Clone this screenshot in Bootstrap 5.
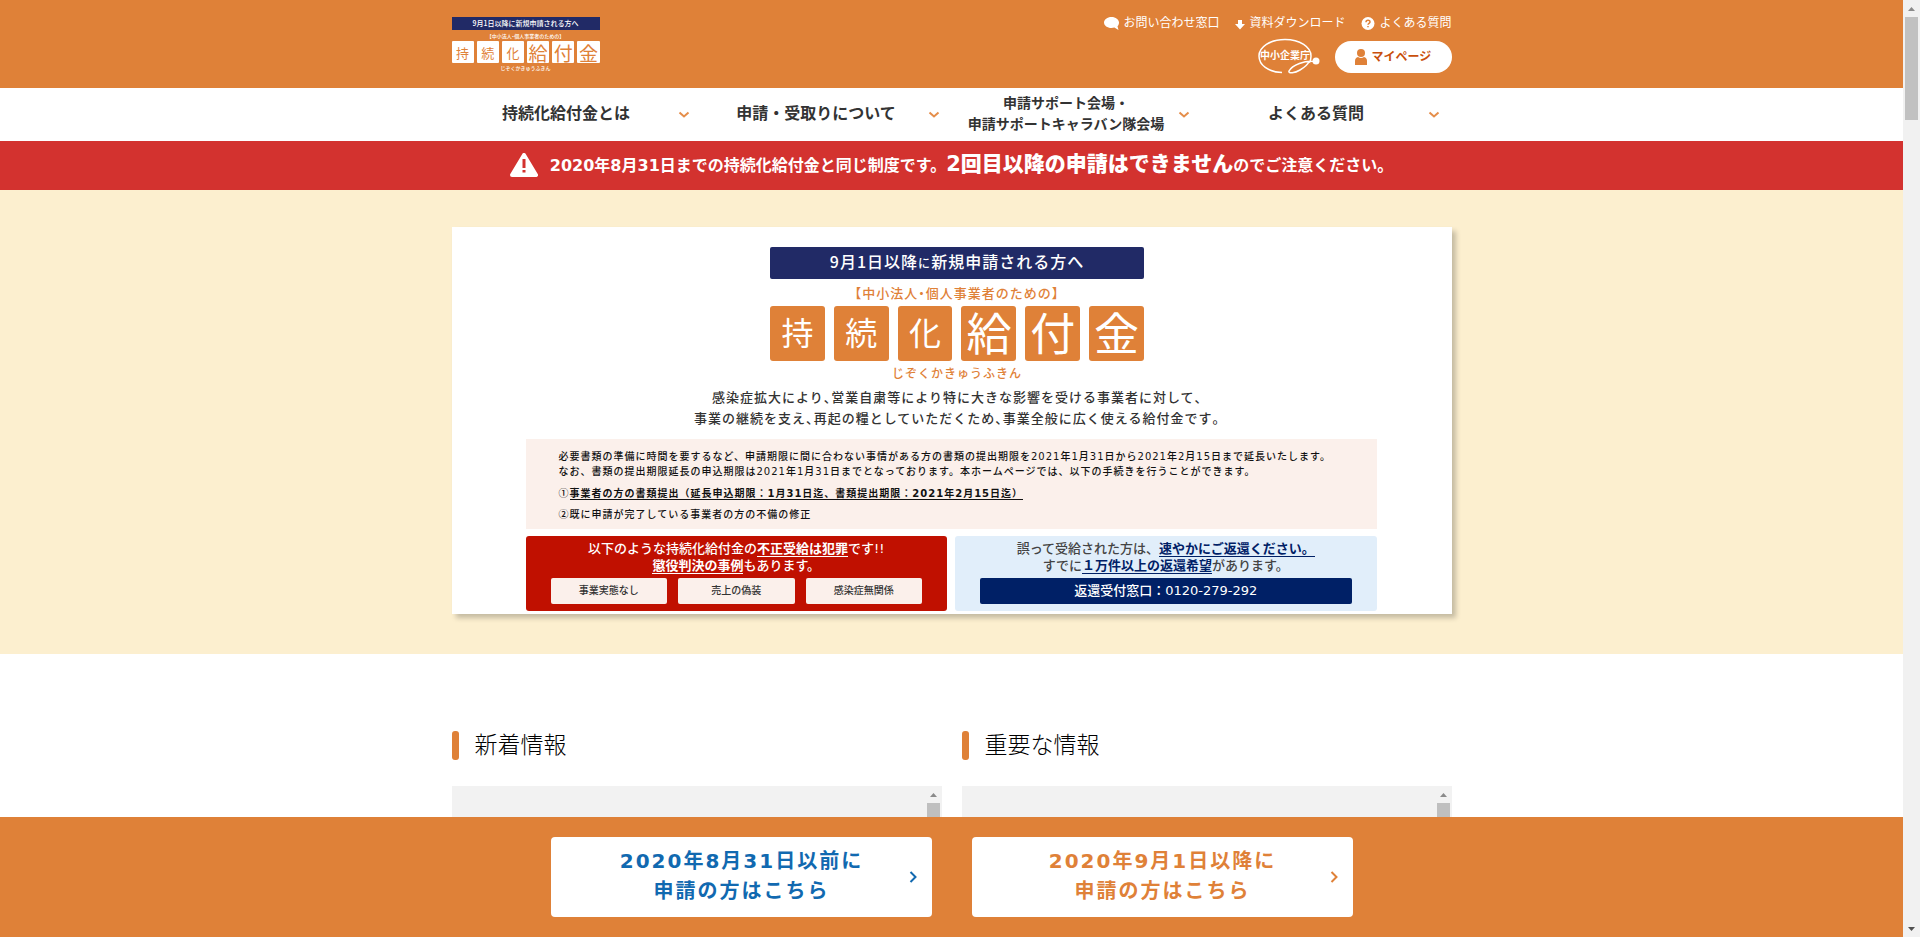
<!DOCTYPE html>
<html lang="ja">
<head>
<meta charset="utf-8">
<meta name="viewport" content="width=device-width, initial-scale=1">
<title>持続化給付金</title>
<link rel="stylesheet" href="https://cdn.jsdelivr.net/npm/bootstrap@5.3.0/dist/css/bootstrap.min.css">
<style>
:root{--brand:#df8138;--navy:#212a66;--deep:#002066}
body{font-family:"DejaVu Sans","Noto Sans CJK JP",sans-serif;color:#333;background:#fff}
a{text-decoration:none;color:inherit}
.site-width{width:100%;max-width:1000px;margin-inline:auto}
.bg-brand{background:var(--brand)}
.site-header{height:88px}
/* title artwork, shared by the header and the hero */
.title-art{font-family:"Noto Sans CJK JP",sans-serif;font-weight:500;text-align:center;line-height:1}
.half{font-feature-settings:"halt"}
.title-banner{background:var(--navy);color:#fff}
.tile{display:flex;align-items:center;justify-content:center;font-weight:400;flex:1 1 0;min-width:0}
.art-s{width:148px;color:#fff;margin-top:17px}
.art-s .title-banner{font-size:7px;line-height:13px}
.art-s .title-sub{font-size:5px;line-height:11px}
.art-s .tiles{gap:3px}
.art-s .tile{height:22px;background:#fff;color:var(--brand);font-size:13px;border-radius:1px}
.art-s .tile.big{font-size:19px}
.art-s .title-kana{font-size:5px;line-height:10px}
.art-l{width:374px;color:var(--brand)}
.art-l .title-banner{font-size:16px;letter-spacing:1px;line-height:29px;padding-bottom:2px;border-radius:2px}
.art-l .title-banner small{font-size:12px}
.art-l .title-sub{font-size:13px;letter-spacing:1px;line-height:27px}
.art-l .tiles{gap:9px}
.art-l .tile{height:55px;background:var(--brand);color:#fff;font-size:32px;line-height:49px;padding-bottom:4px;border-radius:3px}
.art-l .tile.big{font-size:45px}
.art-l .title-kana{font-size:12px;letter-spacing:1px;line-height:24px}
.util{font-size:12px;line-height:18px;color:#fff;gap:16px;padding-top:14px}
.util a{gap:4px}
.account{gap:14px;padding-top:6px}
.agency{width:64px;height:38px}
.mypage{width:117px;height:32px;font-size:12px;font-weight:700;color:#c9500c;background:#fff;gap:5px;margin-top:3px}
.gnav{height:53px}
.gnav button{flex:1 1 0;border:0;background:none;color:#333;font-weight:700;font-size:16px;line-height:21px;padding:0 12px 0 3px;height:53px}
.gnav span{padding-bottom:2px}
.gnav .two-line{font-size:14px}
.notice{background:#d3322f;color:#fff;height:49px;font-size:16px;font-weight:700;gap:12px;padding-bottom:2px}
.notice strong{font-size:21px}
.hero{background:#fcefcf;padding:37px 0 40px}
.hero-card{background:#fff;padding:20px 75px 3px 74px;box-shadow:4px 4px 5px rgba(0,0,0,.22);font-weight:500}
.hero-head{padding-left:12px}
.lead-copy{font-size:13px;letter-spacing:1px;line-height:21px;text-align:center;height:54px;padding-top:2px}
.procedure{background:#fbf0eb;color:#111;font-size:10px;letter-spacing:1px;padding:10px 30px 0 33px;height:90px}
.procedure p{line-height:15px}
.procedure li{line-height:20px}
.procedure i{font-style:normal;font-family:"Noto Sans CJK JP",sans-serif}
.procedure b,.warn b,.refund b{border-bottom:1px solid currentColor}
.boxes{padding-top:7px}
.warn,.refund{height:75px;flex:1 1 0;border-radius:3px;padding:4px 25px 0;font-size:13px;line-height:17px;text-align:center}
.warn{background:#c01000;color:#fff}
.refund{background:#e1eefa;color:#444}
.refund b{color:var(--deep)}
.cases{gap:11px}
.case{flex:1 1 0;height:26px;line-height:26px;background:#fbf0eb;color:#333;border-radius:2px;font-size:10px}
.phone{display:block;height:26px;line-height:26px;background:var(--deep);color:#fff;border-radius:2px}
.info{padding-top:77px}
.info h2{font-size:23px;font-weight:300;line-height:29px;color:#000;gap:16px;margin:0 0 26px}
.info h2::before{content:"";width:7px;height:29px;border-radius:3px;background:var(--brand)}
.panel{background:#f2f2f2;height:360px;padding:3px 2px}
.panel-bar{width:13px;padding-top:4px}
.panel-thumb{width:13px;height:80px;background:#bfbfbf;margin-top:6px}
.cta{height:120px;gap:40px}
.cta a{width:381px;height:80px;background:#fff;border-radius:4px;font-size:20px;line-height:30px;font-weight:700;letter-spacing:2px;padding:0 15px 0 24px}
.cta span{padding-bottom:2px}
.cta .before{color:#1169b0}
.cta .after{color:var(--brand)}
.page-bar{width:17px;background:#f1f1f1;padding:7px 2px 6px}
.page-thumb{width:13px;height:103px;background:#c1c1c1;margin-top:6px}
</style>
</head>
<body>
<div class="d-flex vh-100 overflow-hidden">
<div class="d-flex flex-column flex-grow-1 overflow-hidden">
<div class="flex-grow-1 overflow-hidden">

<header class="site-header bg-brand">
<div class="site-width d-flex justify-content-between">
  <a href="#" class="title-art art-s">
    <div class="title-banner">9月1日以降に新規申請される方へ</div>
    <div class="title-sub"><span class="half">【</span>中小法人<span class="half">・</span>個人事業者のための<span class="half">】</span></div>
    <div class="tiles d-flex"><span class="tile">持</span><span class="tile">続</span><span class="tile">化</span><span class="tile big">給</span><span class="tile big">付</span><span class="tile big">金</span></div>
    <div class="title-kana">じぞくかきゅうふきん</div>
  </a>
  <div>
    <div class="util d-flex justify-content-end">
      <a href="#" class="d-flex align-items-center"><svg width="15" height="13" viewBox="0 0 15 13" fill="#fff"><path d="M7.500 0C3.300 0 0 2.500 0 5.500S3.300 11 7.500 11c1 0 2-.1 2.900-.4L14.500 13l-1-3.700C14.500 8.300 15 7 15 5.500 15 2.500 11.700 0 7.500 0z"/></svg>お問い合わせ窓口</a>
      <a href="#" class="d-flex align-items-center"><svg width="10" height="13" viewBox="0 0 10 13" fill="#fff"><path d="M3 3h4v4h3l-5 5.500L0 7h3z"/></svg>資料ダウンロード</a>
      <a href="#" class="d-flex align-items-center"><svg width="14" height="13" viewBox="0 0 14 13"><circle cx="7" cy="6.500" r="6.500" fill="#fff"/><path d="M5 5.200c0-2.600 4-2.600 4-.3C9 6.300 7 6.300 7 7.800M7 8.900v1.400" fill="none" stroke="#df8138" stroke-width="1.500"/></svg>よくある質問</a>
    </div>
    <div class="account d-flex justify-content-end">
      <a href="#" aria-label="中小企業庁"><svg class="agency d-block" viewBox="0 0 64 38"><g fill="none" stroke="#fff" stroke-width="1.500"><path d="M25 34.500C11 34 2 27 2 18 2 9 13 1.500 28 1.500S54 9 54 18c0 2.500-.6 5-1.500 7M58 23.500C48 22 35 27 32 33c-1 3 6 2 11-1 5-2.800 8-6 9.500-9"/></g><circle cx="59" cy="23" r="3.500" fill="#fff"/><text x="28" y="21" text-anchor="middle" font-family="Noto Sans CJK JP, sans-serif" font-size="10" font-weight="700" fill="#fff">中小企業庁</text></svg></a>
      <a href="#" class="mypage rounded-pill d-flex align-items-center justify-content-center"><svg width="12" height="16" viewBox="0 0 12 16" fill="#df8138"><circle cx="6" cy="4" r="4"/><path d="M0 16v-4c0-2 1-3.500 3-4 2 1.300 4 1.300 6 0 2 .5 3 2 3 4v4z"/></svg>マイページ</a>
    </div>
  </div>
</div>
</header>

<nav class="gnav site-width d-flex">
  <button type="button" class="d-flex align-items-center"><span class="flex-grow-1">持続化給付金とは</span><svg width="12" height="8" viewBox="0 0 12 8"><path d="M1.500 1.500 6 5.500l4.500-4" fill="none" stroke="#e58e4b" stroke-width="2"/></svg></button>
  <button type="button" class="d-flex align-items-center"><span class="flex-grow-1">申請・受取りについて</span><svg width="12" height="8" viewBox="0 0 12 8"><path d="M1.500 1.500 6 5.500l4.500-4" fill="none" stroke="#e58e4b" stroke-width="2"/></svg></button>
  <button type="button" class="d-flex align-items-center two-line"><span class="flex-grow-1">申請サポート会場・<br>申請サポートキャラバン隊会場</span><svg width="12" height="8" viewBox="0 0 12 8"><path d="M1.500 1.500 6 5.500l4.500-4" fill="none" stroke="#e58e4b" stroke-width="2"/></svg></button>
  <button type="button" class="d-flex align-items-center"><span class="flex-grow-1">よくある質問</span><svg width="12" height="8" viewBox="0 0 12 8"><path d="M1.500 1.500 6 5.500l4.500-4" fill="none" stroke="#e58e4b" stroke-width="2"/></svg></button>
</nav>

<div class="notice d-flex align-items-center justify-content-center">
  <svg width="28" height="24" viewBox="0 0 28 24"><path d="M14 2 26 22H2z" fill="#fff" stroke="#fff" stroke-width="4" stroke-linejoin="round"/><path d="M14 6v9M14 17v2.500" stroke="#d3322f" stroke-width="3"/></svg>
  <span>2020年8月31日までの持続化給付金と同じ制度です。<strong>2回目以降の申請はできません</strong>のでご注意ください。</span>
</div>

<main>
<section class="hero">
<div class="hero-card site-width">
  <div class="hero-head">
  <div class="title-art art-l mx-auto">
    <div class="title-banner">9月1日以降<small>に</small>新規申請される方へ</div>
    <div class="title-sub"><span class="half">【</span>中小法人<span class="half">・</span>個人事業者のための<span class="half">】</span></div>
    <div class="tiles d-flex"><span class="tile">持</span><span class="tile">続</span><span class="tile">化</span><span class="tile big">給</span><span class="tile big">付</span><span class="tile big">金</span></div>
    <div class="title-kana">じぞくかきゅうふきん</div>
  </div>
  <p class="lead-copy mb-0">感染症拡大により<span class="half">、</span>営業自粛等により特に大きな影響を受ける事業者に対して<span class="half">、</span><br>事業の継続を支え<span class="half">、</span>再起の糧としていただくため<span class="half">、</span>事業全般に広く使える給付金です<span class="half">。</span></p>
  </div>
  <div class="procedure">
    <p class="mb-1">必要書類の準備に時間を要するなど、申請期限に間に合わない事情がある方の書類の提出期限を2021年1月31日から2021年2月15日まで延長いたします。<br>なお、書類の提出期限延長の申込期限は2021年1月31日までとなっております。本ホームページでは、以下の手続きを行うことができます。</p>
    <ul class="list-unstyled mb-0"><li><i>①</i><b>事業者の方の書類提出（延長申込期限：1月31日迄、書類提出期限：2021年2月15日迄）</b></li><li><i>②</i>既に申請が完了している事業者の方の不備の修正</li></ul>
  </div>
  <div class="boxes d-flex gap-2">
    <div class="warn">
      <p class="mb-0">以下のような持続化給付金の<b>不正受給は犯罪</b>です!!<br><b>懲役判決の事例</b>もあります。</p>
      <div class="cases d-flex mt-1"><span class="case">事業実態なし</span><span class="case">売上の偽装</span><span class="case">感染症無関係</span></div>
    </div>
    <div class="refund">
      <p class="mb-0">誤って受給された方は、<b>速やかにご返還ください。</b><br>すでに<b>１万件以上の返還希望</b>があります。</p>
      <a href="tel:0120279292" class="phone mt-1">返還受付窓口：0120-279-292</a>
    </div>
  </div>
</div>
</section>

<section class="info site-width">
<div class="row" style="--bs-gutter-x:20px">
  <div class="col-6"><h2 class="d-flex align-items-center">新着情報</h2>
    <div class="panel d-flex justify-content-end"><div class="panel-bar"><svg class="d-block mx-auto" width="7" height="4" viewBox="0 0 7 4"><path d="M0 4 3.500 0 7 4z" fill="#8a8a8a"/></svg><div class="panel-thumb"></div></div></div></div>
  <div class="col-6"><h2 class="d-flex align-items-center">重要な情報</h2>
    <div class="panel d-flex justify-content-end"><div class="panel-bar"><svg class="d-block mx-auto" width="7" height="4" viewBox="0 0 7 4"><path d="M0 4 3.500 0 7 4z" fill="#8a8a8a"/></svg><div class="panel-thumb"></div></div></div></div>
</div>
</section>
</main>
</div>

<div class="cta bg-brand d-flex align-items-center justify-content-center flex-shrink-0">
  <a href="#" class="before d-flex align-items-center"><span class="flex-grow-1 text-center">2020年8月31日以前に<br>申請の方はこちら</span><svg width="8" height="12" viewBox="0 0 8 12"><path d="m1.500 1 5 5-5 5" fill="none" stroke="currentColor" stroke-width="2"/></svg></a>
  <a href="#" class="after d-flex align-items-center"><span class="flex-grow-1 text-center">2020年9月1日以降に<br>申請の方はこちら</span><svg width="8" height="12" viewBox="0 0 8 12"><path d="m1.500 1 5 5-5 5" fill="none" stroke="currentColor" stroke-width="2"/></svg></a>
</div>
</div>

<div class="page-bar d-flex flex-column align-items-center flex-shrink-0" aria-hidden="true">
  <svg width="7" height="4" viewBox="0 0 7 4"><path d="M0 4 3.500 0 7 4z" fill="#8a8a8a"/></svg>
  <div class="page-thumb"></div>
  <svg class="mt-auto" width="7" height="4" viewBox="0 0 7 4"><path d="M0 0h7L3.500 4z" fill="#505050"/></svg>
</div>
</div>
<script src="https://cdn.jsdelivr.net/npm/bootstrap@5.3.0/dist/js/bootstrap.bundle.min.js"></script>
</body>
</html>
